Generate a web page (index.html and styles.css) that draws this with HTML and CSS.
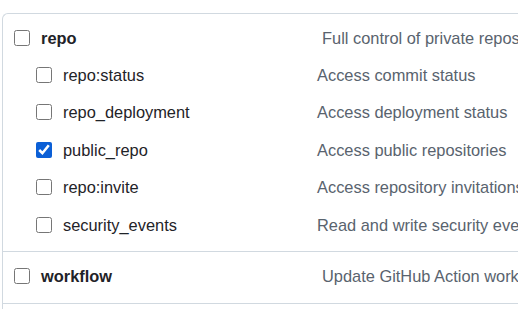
FILE: index.html
```html
<!DOCTYPE html>
<html lang="en">
<head>
    <meta charset="UTF-8">
    <meta name="viewport" content="width=device-width, initial-scale=1.0">
    <title>Token scopes</title>
    <link rel="stylesheet" href="styles.css">
</head>
<body>
    <div class="scopes">
        <div class="scope-group">
            <div class="scope-row top">
                <label class="scope-name"><input type="checkbox"><strong>repo</strong></label>
                <span class="scope-desc">Full control of private repositories</span>
            </div>
            <div class="sub-scopes">
                <div class="scope-row">
                    <label class="scope-name"><input type="checkbox">repo:status</label>
                    <span class="scope-desc">Access commit status</span>
                </div>
                <div class="scope-row">
                    <label class="scope-name"><input type="checkbox">repo_deployment</label>
                    <span class="scope-desc">Access deployment status</span>
                </div>
                <div class="scope-row">
                    <label class="scope-name"><input type="checkbox" checked>public_repo</label>
                    <span class="scope-desc">Access public repositories</span>
                </div>
                <div class="scope-row">
                    <label class="scope-name"><input type="checkbox">repo:invite</label>
                    <span class="scope-desc">Access repository invitations</span>
                </div>
                <div class="scope-row">
                    <label class="scope-name"><input type="checkbox">security_events</label>
                    <span class="scope-desc">Read and write security events</span>
                </div>
            </div>
        </div>
        <div class="scope-group">
            <div class="scope-row top single">
                <label class="scope-name"><input type="checkbox"><strong>workflow</strong></label>
                <span class="scope-desc">Update GitHub Action workflows</span>
            </div>
        </div>
        <div class="scope-group">
            <div class="scope-row top"></div>
        </div>
    </div>
</body>
</html>
```

FILE: styles.css
```css
body {
    font-family: "Liberation Sans", Arial, sans-serif;
    font-size: 16.4px;
    margin: 0;
    padding: 0;
    background-color: #fff;
    color: #1f2328;
    overflow: hidden;
}

.scopes {
    width: 640px;
    margin: 13px 0 0 2px;
    border: 1px solid #d1d9e0;
    border-right: none;
    border-top-left-radius: 6px;
}

.scope-group {
    border-bottom: 1px solid #d1d9e0;
}

.scope-row {
    display: flex;
    align-items: center;
    line-height: 18px;
    white-space: nowrap;
}

.scope-row.top {
    padding: 15px 0 9px 11px;
}

.scope-row.single {
    padding-bottom: 18px;
}

.sub-scopes {
    padding: 0 0 7px 33px;
}

.sub-scopes .scope-row {
    padding: 9.75px 0;
}

.scope-name {
    display: flex;
    align-items: center;
    gap: 11px;
    width: 308px;
    flex-shrink: 0;
}

.sub-scopes .scope-name {
    width: 281px;
}

.scope-name strong {
    font-weight: bold;
}

.scope-name input {
    width: 16px;
    height: 16px;
    margin: 0;
    accent-color: #0b5fd6;
}

.scope-desc {
    color: #59636e;
}
```
